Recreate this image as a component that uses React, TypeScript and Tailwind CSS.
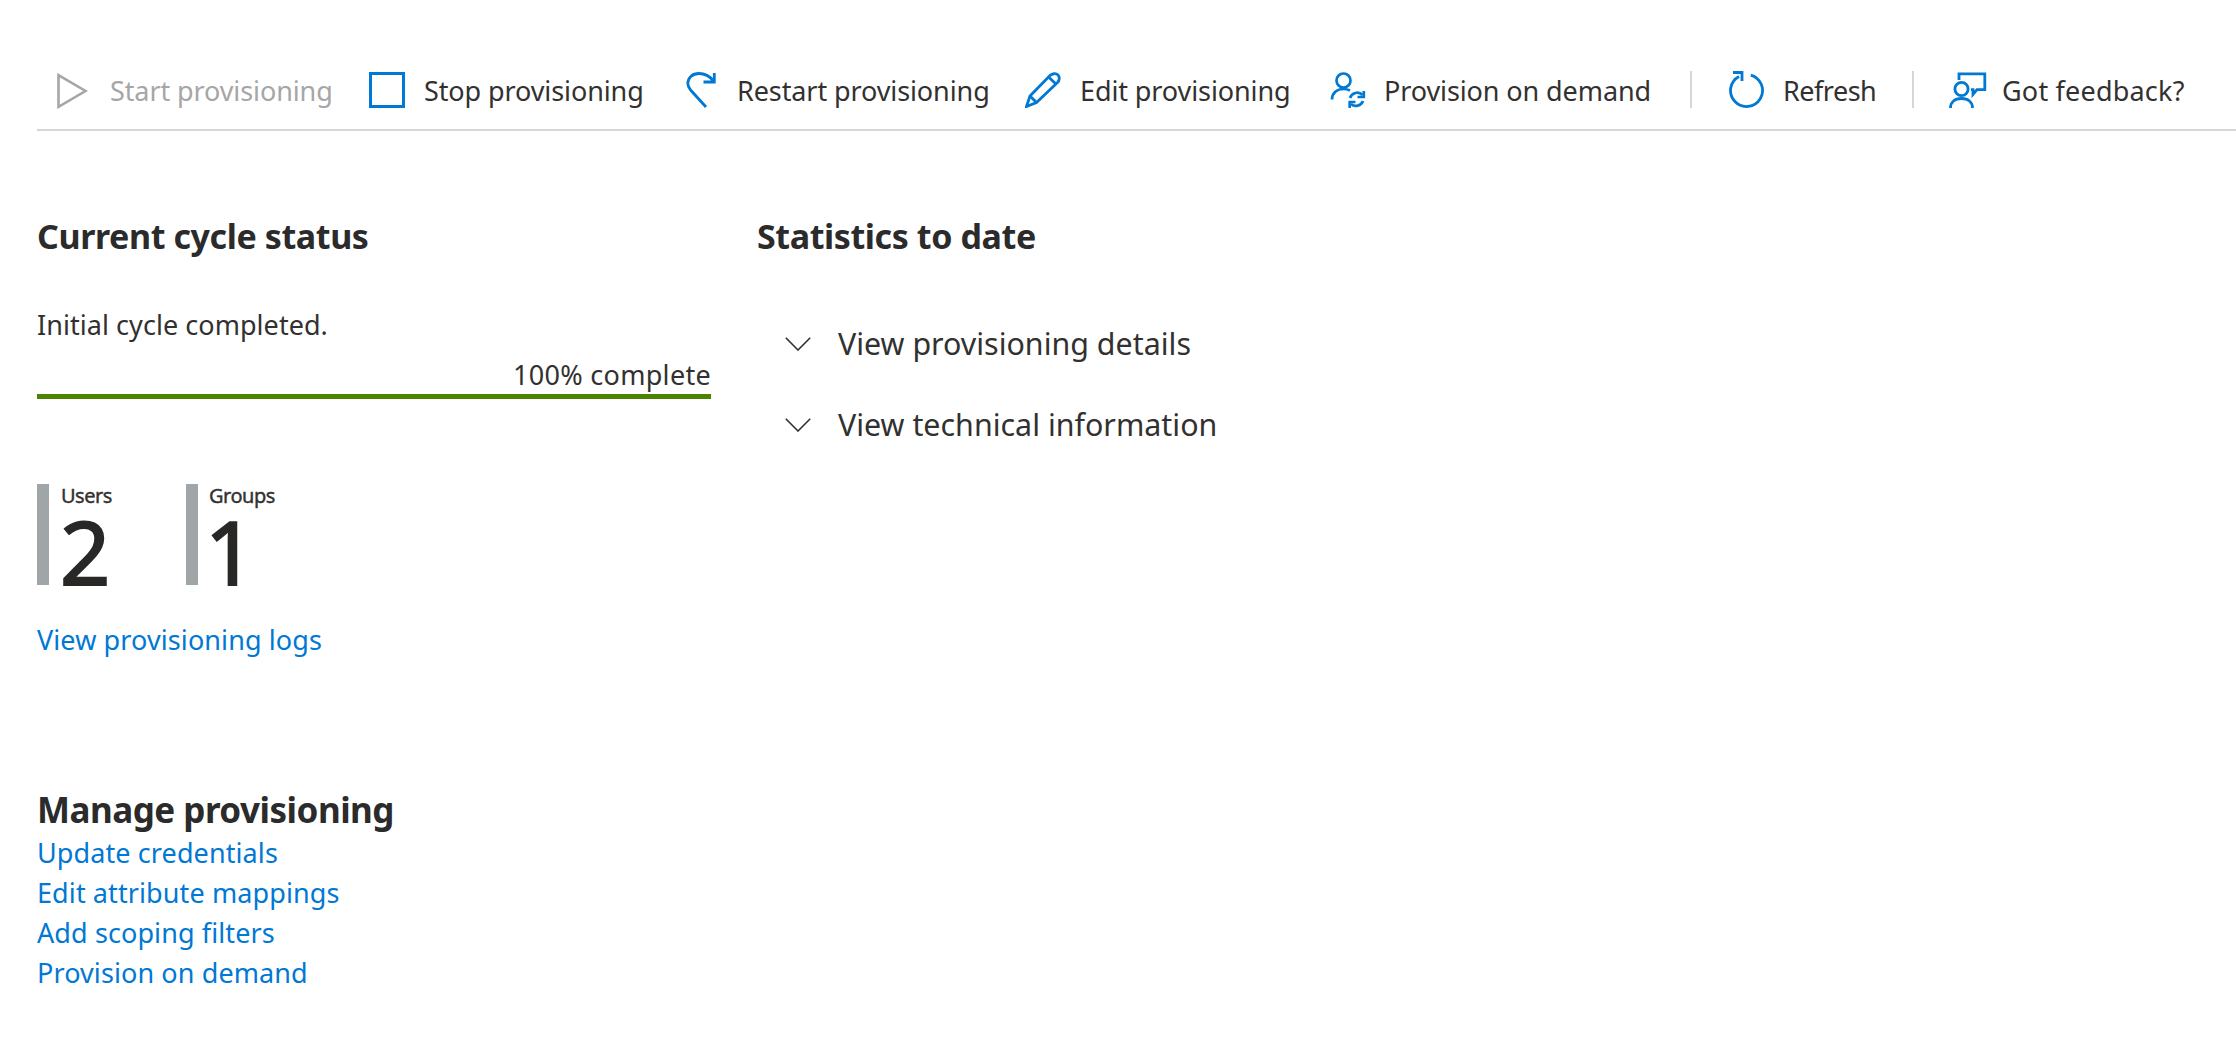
const blue = "#0078d4";

function Play() {
  return (
    <svg width="31" height="36" viewBox="0 0 31 36" fill="none" stroke="#a6a6a6" strokeWidth="2.6" className="mt-[1px]">
      <path d="M1.5 2.2 L28.5 18 L1.5 33.8 Z" />
    </svg>
  );
}
function Stop() {
  return (
    <svg width="36" height="36" viewBox="0 0 36 36" fill="none" stroke={blue} strokeWidth="3">
      <rect x="1.5" y="1.5" width="33" height="33" />
    </svg>
  );
}
function Restart() {
  return (
    <svg width="30" height="36" viewBox="0 0 30 36" fill="none" stroke={blue} strokeWidth="2.8">
      <path d="M27 9 C24.5 4 18 1.5 13 1.5 C6 1.5 1.8 6 1.8 11.5 C1.8 14.5 3.5 16.5 5 18.5 L20 35" />
      <path d="M28.3 1 V10 H17.5" />
    </svg>
  );
}
function Pencil() {
  return (
    <svg width="37" height="36" viewBox="0 0 37 36" fill="none" stroke={blue} strokeWidth="2.8" strokeLinejoin="miter">
      <path d="M1.5 34.5 L5 24 L25 3.5 C27 1.5 31 1 33 3 C35 5 34.5 8.5 32.5 10.5 L11.5 30.5 Z" />
      <path d="M5 24 L11.5 30.5" />
      <path d="M23 4.5 L31 12" />
    </svg>
  );
}
function UserSync() {
  return (
    <svg width="37" height="38" viewBox="0 0 37 38" fill="none" stroke={blue} strokeWidth="2.7">
      <circle cx="13.5" cy="9.5" r="7" />
      <path d="M2 28.5 C2 22 7 18 13.5 18 C16 18 18 18.5 20 19.5" />
      <path d="M20 27 A7.5 7.5 0 0 1 32.5 24" />
      <path d="M33.8 20 V26 H27.5" />
      <path d="M33 30 A7.5 7.5 0 0 1 21 33" />
      <path d="M19.7 37 V31 H25.5" />
    </svg>
  );
}
function Refresh() {
  return (
    <svg width="37" height="38" viewBox="0 0 37 38" fill="none" stroke={blue} strokeWidth="2.8">
      <path d="M22.8 4.1 A16 16 0 1 1 11 5.4" />
      <path d="M5 1.5 H14 V10" />
    </svg>
  );
}
function Feedback() {
  return (
    <svg width="38" height="36" viewBox="0 0 38 36" fill="none" stroke={blue} strokeWidth="2.8">
      <path d="M10 8 V1.8 H35.8 V17.7 H28 L24 22.5 V17.7 H22" />
      <circle cx="12.5" cy="17" r="6.6" />
      <path d="M1.5 36 C1.5 30 6 26.5 12.5 26.5 C19 26.5 23.5 30 23.5 36" />
    </svg>
  );
}
function Chevron() {
  return (
    <svg width="26" height="14" viewBox="0 0 26 14" fill="none" stroke="#323130" strokeWidth="1.6">
      <path d="M0.8 0.8 L13 13 L25.2 0.8" />
    </svg>
  );
}

function ToolButton({ icon, label, width, iconBox, track = "tracking-[-0.1px]", disabled }: { icon: React.ReactNode; label: string; width: string; iconBox: string; track?: string; disabled?: boolean }) {
  return (
    <div className={`flex items-center ${width}`}>
      <div className={`flex items-center ${iconBox}`}>{icon}</div>
      <span className={`text-[27px] mt-[2px] leading-[36px] whitespace-nowrap ${track} ${disabled ? "text-[#a6a6a6]" : "text-[#323130]"}`}>{label}</span>
    </div>
  );
}

function Stat({ label, value, width, shift }: { label: string; value: string; width: string; shift: string }) {
  return (
    <div className={`flex ${width}`}>
      <div className="w-[12px] h-[101px] bg-[#a0a5a8]" />
      <div className="ml-[12px]">
        <div className={`text-[20px] leading-[24px] tracking-[-0.5px] [-webkit-text-stroke:0.4px_#323130] text-[#323130] ${shift}`}>{label}</div>
        <div className={`text-[88px] leading-[76px] [-webkit-text-stroke:2px_#292827] text-[#292827] mt-[5px] ${shift === "" ? "-ml-[1px]" : "-ml-[5px]"}`}>{value}</div>
      </div>
    </div>
  );
}

function Accordion({ label }: { label: string }) {
  return (
    <div className="flex items-center h-[81px]">
      <div className="w-[53px] ml-[28px] flex items-center"><Chevron /></div>
      <span className="text-[30.4px] leading-[40px] text-[#323130]">{label}</span>
    </div>
  );
}

const sectionHeading = "text-[34px] leading-[44px] font-bold tracking-[-0.4px] text-[#2b2b2b]";
const link = "text-[27px] leading-[40px] text-[#0078d4] tracking-[0.1px]";

export default function App() {
  return (
    <div className="min-h-[1053px] bg-white font-['Noto_Sans','Open_Sans',sans-serif] pl-[37px]">
      <div className="pt-[71px] h-[131px] border-b-2 border-[#d6d6d6] flex items-start pl-[20px]">
        <ToolButton icon={<Play />} label="Start provisioning" width="w-[312px]" iconBox="w-[53px]" disabled />
        <ToolButton icon={<Stop />} label="Stop provisioning" width="w-[317px]" iconBox="w-[55px]" />
        <ToolButton icon={<Restart />} label="Restart provisioning" width="w-[339px]" iconBox="w-[51px]" />
        <ToolButton icon={<Pencil />} label="Edit provisioning" width="w-[305px]" iconBox="w-[55px]" />
        <ToolButton icon={<UserSync />} label="Provision on demand" width="w-[360px]" iconBox="w-[54px]" />
        <div className="w-[2px] h-[37px] bg-[#d6d6d6] mr-[36px]" />
        <ToolButton icon={<Refresh />} label="Refresh" width="w-[184px]" iconBox="w-[55px]" track="tracking-[-0.5px]" />
        <div className="w-[2px] h-[37px] bg-[#d6d6d6] mr-[35px]" />
        <ToolButton icon={<Feedback />} label="Got feedback?" width="w-[240px]" iconBox="w-[53px]" track="tracking-[0.2px]" />
      </div>

      <div className="flex pt-[83px]">
        <div className="w-[674px]">
          <h2 className={sectionHeading}>Current cycle status</h2>
          <p className="mt-[47px] text-[27px] leading-[40px] tracking-[0.05px] text-[#323130]">Initial cycle completed.</p>
          <p className="mt-[10px] text-right text-[27px] leading-[40px] tracking-[0.3px] text-[#323130]">100% complete</p>
          <div className="h-[5px] bg-[#4b8200] -mt-[1px]" />
          <div className="flex mt-[85px]">
            <Stat label="Users" value="2" width="w-[149px]" shift="" />
            <Stat label="Groups" value="1" width="w-[149px]" shift="-ml-[1px]" />
          </div>
          <a className={`${link} block mt-[31px]`}>View provisioning logs</a>
          <h2 className="mt-[128px] text-[35px] leading-[44px] font-bold tracking-[-0.5px] text-[#2b2b2b]">Manage provisioning</h2>
          <div className="mt-[1px] flex flex-col">
            <a className={link}>Update credentials</a>
            <a className={link}>Edit attribute mappings</a>
            <a className={link}>Add scoping filters</a>
            <a className={link}>Provision on demand</a>
          </div>
        </div>
        <div className="ml-[46px] w-[700px]">
          <h2 className={sectionHeading}>Statistics to date</h2>
          <div className="mt-[45px]">
            <Accordion label="View provisioning details" />
            <Accordion label="View technical information" />
          </div>
        </div>
      </div>
    </div>
  );
}
